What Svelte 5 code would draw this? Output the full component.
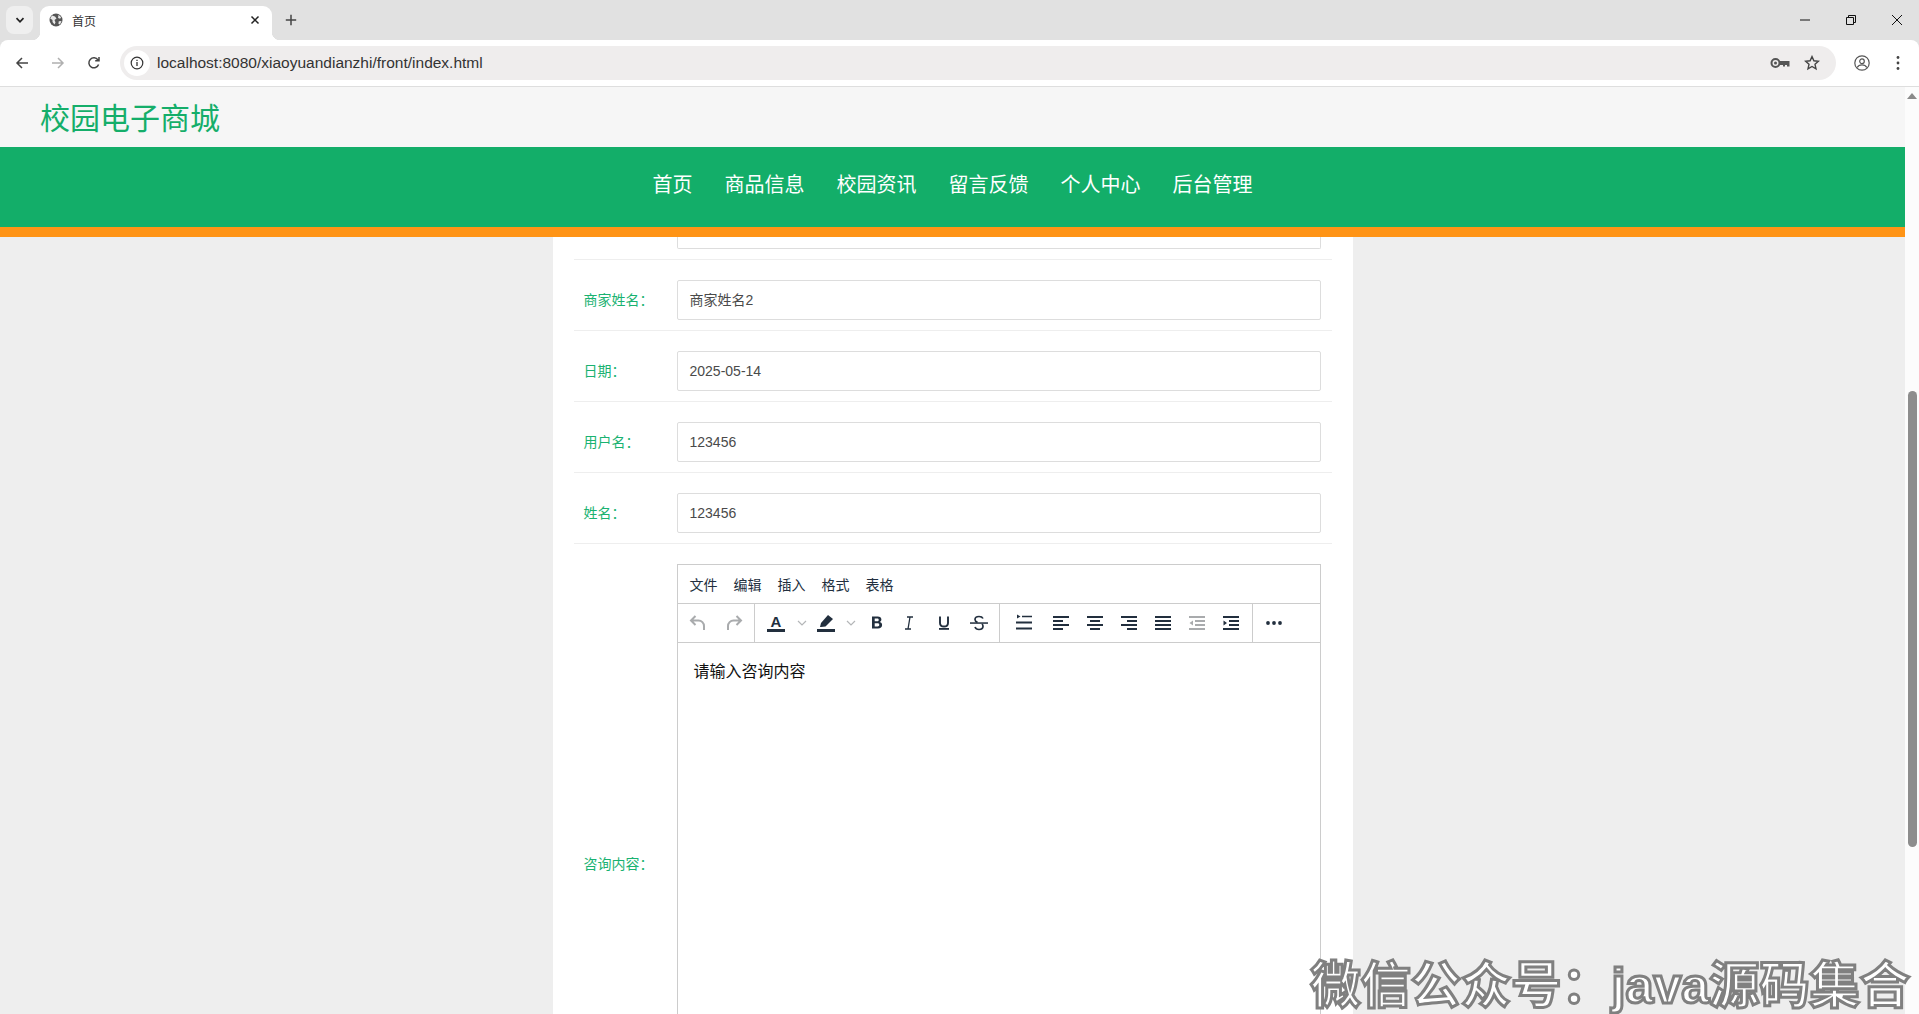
<script>
  const navItems = ['首页', '商品信息', '校园资讯', '留言反馈', '个人中心', '后台管理'];
  const rows = [
    { label: '商家姓名：', value: '商家姓名2' },
    { label: '日期：', value: '2025-05-14' },
    { label: '用户名：', value: '123456' },
    { label: '姓名：', value: '123456' }
  ];
  const menus = ['文件', '编辑', '插入', '格式', '表格'];
</script>

<div class="browser">
  <div class="tabstrip">
    <button class="tab-search" aria-label="Search tabs">
      <svg viewBox="0 0 12 12" width="12" height="12"><path d="M2.5 4.2 6 7.8l3.5-3.6" fill="none" stroke="#222" stroke-width="1.7" /></svg>
    </button>
    <div class="tab">
      <svg class="globe" viewBox="0 0 14 14" width="14" height="14">
        <circle cx="7" cy="7" r="6.5" fill="#555" />
        <path d="M3 2.5l3 1 1.5 2-2 1.5 1 2.5-1 2-2-2.5V7L1.2 5.5zM9.5 1.8l2.6 2.4-1 1.6-2-.8zM12.5 8l-1.5 3.4-1.6-.6.4-2.6z" fill="#e8e8e8" />
      </svg>
      <span class="tab-title">首页</span>
      <svg class="tab-x" viewBox="0 0 10 10" width="10" height="10"><path d="M1.5 1.5l7 7M8.5 1.5l-7 7" stroke="#222" stroke-width="1.5" /></svg>
    </div>
    <svg class="newtab" viewBox="0 0 12 12" width="12" height="12"><path d="M6 .8v10.400M.8 6h10.400" stroke="#444" stroke-width="1.500" /></svg>
    <div class="winctl">
      <svg viewBox="0 0 12 12" width="12" height="12"><path d="M1 6h10" stroke="#111" stroke-width="1" /></svg>
      <svg viewBox="0 0 12 12" width="12" height="12"><path d="M1.500 3.500h7v7h-7zM3.500 3.500v-2h7v7h-2" fill="none" stroke="#111" stroke-width="1" /></svg>
      <svg viewBox="0 0 12 12" width="12" height="12"><path d="M1 1l10 10M11 1 1 11" stroke="#111" stroke-width="1" /></svg>
    </div>
  </div>

  <div class="toolbar">
    <svg class="tool" viewBox="0 0 14 14" width="14" height="14"><path d="M13 7H2M7 2 2 7l5 5" fill="none" stroke="#444" stroke-width="1.500" /></svg>
    <svg class="tool" viewBox="0 0 14 14" width="14" height="14"><path d="M1 7h11M7 2l5 5-5 5" fill="none" stroke="#b0b0b0" stroke-width="1.500" /></svg>
    <svg class="tool" viewBox="0 0 14 14" width="14" height="14"><path d="M11.600 8.500A5 5 0 1 1 11 4M12 1v3.800H8.200" fill="none" stroke="#444" stroke-width="1.500" /></svg>
    <div class="omnibox">
      <span class="info">
        <svg viewBox="0 0 14 14" width="14" height="14"><circle cx="7" cy="7" r="5.800" fill="none" stroke="#333" stroke-width="1.200" /><path d="M7 6v4M7 3.800v1.200" stroke="#333" stroke-width="1.300" /></svg>
      </span>
      <span class="url">localhost:8080/xiaoyuandianzhi/front/index.html</span>
      <svg class="key" viewBox="0 0 20 12" width="20" height="12"><circle cx="5.500" cy="6" r="4" fill="none" stroke="#555" stroke-width="2" /><circle cx="5.500" cy="6" r="1.500" fill="#555" /><path d="M9 4H19.500V9.500h-2.500V8h-2v1.500h-2V8H9z" fill="#555" /></svg>
      <svg class="star" viewBox="0 0 16 16" width="16" height="16"><path d="M8 1.600l1.900 4.200 4.500.5-3.400 3 1 4.500L8 11.500l-4 2.300 1-4.500-3.400-3 4.500-.5z" fill="none" stroke="#444" stroke-width="1.400" /></svg>
    </div>
    <svg class="profile" viewBox="0 0 16 16" width="16" height="16"><circle cx="8" cy="8" r="7.200" fill="none" stroke="#555" stroke-width="1.200" /><circle cx="8" cy="6.200" r="2.300" fill="none" stroke="#555" stroke-width="1.200" /><path d="M3.200 12.600c1-2 3-2.700 4.800-2.700s3.800.7 4.800 2.700" fill="none" stroke="#555" stroke-width="1.200" /></svg>
    <svg class="kebab" viewBox="0 0 4 16" width="4" height="16"><circle cx="2" cy="2.500" r="1.400" fill="#444" /><circle cx="2" cy="8" r="1.400" fill="#444" /><circle cx="2" cy="13.500" r="1.400" fill="#444" /></svg>
  </div>

  <div class="viewport">
    <div class="page">
      <header class="site-head">
        <div class="site-title">校园电子商城</div>
      </header>
      <nav class="site-nav">
        {#each navItems as item}
          <span class="nav-item">{item}</span>
        {/each}
      </nav>

      <main class="sheet">
        <div class="row stub"><div class="label"></div><div class="input"></div></div>
        {#each rows as r}
          <div class="row">
            <div class="label">{r.label}</div>
            <div class="input">{r.value}</div>
          </div>
        {/each}
        <div class="row editor-row">
          <div class="label">咨询内容：</div>
          <div class="editor">
            <div class="menubar">
              {#each menus as m}<span>{m}</span>{/each}
            </div>
            <div class="edbar">
              <div class="group first">
                <svg viewBox="0 0 20 20" width="20" height="20"><path d="M7.500 3 3 7.500l4.500 4.500M3.500 7.500h7a5.500 5.500 0 0 1 5.500 5.500v4" fill="none" stroke="#a9abad" stroke-width="2" /></svg>
                <svg viewBox="0 0 20 20" width="20" height="20"><path d="M12.500 3 17 7.500 12.500 12M16.500 7.500h-7A5.500 5.500 0 0 0 4 13v4" fill="none" stroke="#a9abad" stroke-width="2" /></svg>
              </div>
              <div class="group mid">
                <svg viewBox="0 0 20 20" width="20" height="20"><text x="10" y="13.500" text-anchor="middle" class="glyph">A</text><rect x="1" y="16" width="18" height="3" fill="#222f3e" /></svg>
                <svg class="chev c1" viewBox="0 0 10 10" width="10" height="10"><path d="M1 3l4 4 4-4" fill="none" stroke="#b4b6b8" stroke-width="1.200" /></svg>
                <svg class="hl" viewBox="0 0 20 20" width="20" height="20"><path d="M4 14l1-4 7-8 5 4-7.500 7.500-4.500.5z" fill="#222f3e" /><rect x="1" y="16" width="18" height="3" fill="#222f3e" /></svg>
                <svg class="chev c2" viewBox="0 0 10 10" width="10" height="10"><path d="M1 3l4 4 4-4" fill="none" stroke="#b4b6b8" stroke-width="1.200" /></svg>
                <svg class="b" viewBox="0 0 20 20" width="20" height="20"><path d="M5 3.500h5.700c2.300 0 3.700 1.200 3.700 3 0 1.200-.6 2-1.600 2.500 1.500.4 2.300 1.500 2.300 3 0 2.200-1.600 3.500-4.100 3.500H5zM7.700 5.600v2.600h2.500c1 0 1.500-.5 1.500-1.300s-.5-1.300-1.500-1.300zM7.700 10.200v3.200h2.800c1.200 0 1.800-.6 1.800-1.600s-.6-1.600-1.800-1.600z" fill="#222f3e" fill-rule="evenodd" /></svg>
                <svg class="i" viewBox="0 0 20 20" width="20" height="20"><path d="M8 4h6M6 16h6M11 4 9 16" fill="none" stroke="#222f3e" stroke-width="1.300" /></svg>
                <svg class="u" viewBox="0 0 20 20" width="20" height="20"><path d="M6 3.500v6.500c0 2.400 1.500 3.500 4 3.500s4-1.100 4-3.500V3.500" fill="none" stroke="#222f3e" stroke-width="1.900" /><rect x="5" y="15" width="10" height="1.800" fill="#222f3e" /></svg>
                <svg class="s" viewBox="0 0 20 20" width="20" height="20"><path d="M14 5.500c-.6-1.300-2-2-4-2-2.400 0-4 1-4 3 0 1.500 1 2.300 2.500 2.900M6 14c.6 1.700 2 2.500 4 2.500 2.400 0 4-1.200 4-3.200 0-1-.4-1.700-1-2.300" fill="none" stroke="#222f3e" stroke-width="1.700" /><rect x="1" y="9.300" width="18" height="1.500" fill="#222f3e" /></svg>
              </div>
              <div class="group lines">
                <svg class="lh" viewBox="0 0 20 20" width="20" height="20"><path d="M3 1.500v4l3.500-2zM8 2.700h10v1.600H8zM2 8.500h16v2H2zM2 14.500h16v2H2z" fill="#222f3e" /></svg>
                <svg viewBox="0 0 20 20" width="20" height="20"><path d="M2 3h16v2H2zM2 7h10v2H2zM2 11h16v2H2zM2 15h10v2H2z" fill="#222f3e" /></svg>
                <svg viewBox="0 0 20 20" width="20" height="20"><path d="M2 3h16v2H2zM5 7h10v2H5zM2 11h16v2H2zM5 15h10v2H5z" fill="#222f3e" /></svg>
                <svg viewBox="0 0 20 20" width="20" height="20"><path d="M2 3h16v2H2zM8 7h10v2H8zM2 11h16v2H2zM8 15h10v2H8z" fill="#222f3e" /></svg>
                <svg viewBox="0 0 20 20" width="20" height="20"><path d="M2 3h16v2H2zM2 7h16v2H2zM2 11h16v2H2zM2 15h16v2H2z" fill="#222f3e" /></svg>
                <svg viewBox="0 0 20 20" width="20" height="20"><path d="M2 3h16v2H2zM8 7h10v2H8zM8 11h10v2H8zM2 15h16v2H2zM6 7.500v5L2.500 10z" fill="#a9abad" /></svg>
                <svg viewBox="0 0 20 20" width="20" height="20"><path d="M2 3h16v2H2zM8 7h10v2H8zM8 11h10v2H8zM2 15h16v2H2zM2.500 7.500v5L6 10z" fill="#222f3e" /></svg>
              </div>
              <div class="group more">
                <svg viewBox="0 0 20 20" width="20" height="20"><circle cx="4" cy="10" r="1.900" fill="#222f3e" /><circle cx="10" cy="10" r="1.900" fill="#222f3e" /><circle cx="16" cy="10" r="1.900" fill="#222f3e" /></svg>
              </div>
            </div>
            <div class="edbody">请输入咨询内容</div>
          </div>
        </div>
      </main>
    </div>

    <div class="scrollbar">
      <svg class="arrow" viewBox="0 0 10 6" width="10" height="6"><path d="M0 6 5 0l5 6z" fill="#8a8a8a" /></svg>
      <div class="thumb"></div>
    </div>
    <div class="watermark">微信公众号：java源码集合</div>
  </div>
</div>

<style>
  :global(body) {
    margin: 0;
    overflow: hidden;
    font-family: "Liberation Sans", "Noto Sans CJK SC", sans-serif;
  }
  .browser { display: flex; flex-direction: column; height: 1014px; overflow: hidden; background: #e1e1e1; }

  .tabstrip { display: flex; align-items: flex-start; height: 40px; background: #e1e1e1; flex: none; }
  .tab-search {
    width: 27px; height: 28px; margin: 6px 0 0 6px; padding: 0; border: 0; border-radius: 8px;
    background: #efefef; display: flex; align-items: center; justify-content: center;
  }
  .tab {
    position: relative; display: flex; align-items: center; width: 232px; height: 34px; margin: 6px 0 0 7px;
    padding: 0 12px 6px 9px; box-sizing: border-box; background: #fff; border-radius: 9px 9px 0 0;
  }
  .tab::before, .tab::after { content: ""; position: absolute; bottom: 0; width: 8px; height: 8px; }
  .tab::before { left: -8px; background: radial-gradient(circle at 0 0, transparent 8px, #fff 8.5px); }
  .tab::after { right: -8px; background: radial-gradient(circle at 100% 0, transparent 8px, #fff 8.5px); }
  .globe { margin-right: 9px; }
  .tab-title { flex: 1; font-size: 12px; color: #333; }
  .newtab { margin: 14px 0 0 13px; }
  .winctl { display: flex; gap: 34px; margin: 14px 16px 0 auto; }

  .toolbar { display: flex; align-items: center; height: 46px; flex: none; border-bottom: 1px solid #dedede; background: #fff; border-radius: 8px 8px 0 0; }
  .tool { margin-left: 15px; margin-right: 7px; }
  .omnibox {
    display: flex; align-items: center; width: 1716px; height: 34px; margin-left: 12px; border-radius: 17px;
    background: #efeded; flex: none;
  }
  .info { display: flex; align-items: center; justify-content: center; width: 26px; height: 26px; margin-left: 4px; border-radius: 50%; background: #fff; }
  .url { margin-left: 7px; font-size: 15.5px; color: #333; flex: 1; }
  .key { margin-right: 14px; }
  .star { margin-right: 16px; }
  .profile { margin-left: 18px; }
  .kebab { margin-left: 26px; }

  .viewport { position: relative; flex: 1; min-height: 0; overflow: hidden; }
  .page { display: flex; flex-direction: column; height: 100%; margin-right: 14px; background: #eee; }
  .site-head { height: 60px; background: #f6f6f6; flex: none; display: flex; align-items: center; padding-left: 40px; }
  .site-title { font-size: 30px; color: #15ae6a; line-height: 60px; margin-top: 4px; }
  .site-nav {
    display: flex; justify-content: center; gap: 32px; height: 80px; flex: none;
    background: #13ae69; border-bottom: 10px solid #ff9416;
  }
  .nav-item { font-size: 20px; line-height: 76px; color: #fff; }

  .sheet { width: 800px; margin: 0 auto; padding: 0 21px; box-sizing: border-box; background: #fff; flex: 1; }
  .row {
    display: flex; align-items: flex-start; height: 71px; box-sizing: border-box; padding: 20px 11px 0 10px;
    border-bottom: 1px solid #eee;
  }
  .label { width: 93px; flex: none; font-size: 14px; line-height: 40px; color: #19b271; }
  .input {
    flex: 1; height: 40px; box-sizing: border-box; padding-left: 12px; line-height: 39px;
    font-size: 14px; color: #4a4a4a; border: 1px solid #ddd; border-radius: 2px;
  }
  .row.stub { height: 23px; padding-top: 0; }
  .row.stub .input { height: 12px; border-top: 0; border-radius: 0 0 2px 2px; }

  .row.editor-row { height: 640px; border-bottom: 0; }
  .editor-row .label { margin-top: 280px; }
  .editor { flex: 1; height: 598px; box-sizing: border-box; border: 1px solid #ccc; }
  .menubar { display: flex; gap: 16px; height: 38px; align-items: center; padding-left: 12px; font-size: 14px; color: #222f3e; border-bottom: 1px solid #ccc; }
  .edbar { display: flex; height: 38px; border-bottom: 1px solid #ccc; }
  .group { display: flex; align-items: center; box-sizing: border-box; border-right: 1px solid #ccc; }
  .group.first { width: 77px; padding-left: 10px; gap: 16px; }
  .group.mid { width: 245px; padding-left: 11px; }
  .c1 { margin-left: 11px; }
  .hl { margin-left: 9px; }
  .c2 { margin-left: 10px; }
  .b { margin-left: 11px; }
  .i { margin-left: 12px; }
  .u, .s { margin-left: 15px; }
  .group.lines { width: 253px; padding-left: 14px; gap: 14px; }
  .lh { margin-right: 3px; }
  .group.more { border-right: 0; padding-left: 11px; }
  .glyph { font: 700 15px "Liberation Sans", sans-serif; fill: #222f3e; }
  .edbody { padding: 18px 16px; font-size: 16px; line-height: 1.4; color: #111; }

  .scrollbar { position: absolute; top: 0; right: 0; bottom: 0; width: 14px; background: #fcfcfc; }
  .arrow { position: absolute; top: 6px; left: 2px; }
  .thumb { position: absolute; top: 304px; left: 3px; width: 9px; height: 456px; border-radius: 5px; background: #8d8d8d; }
  .watermark {
    position: absolute; right: 9px; bottom: 1px; font: 700 50.2px/54px "Liberation Sans", "Noto Sans CJK SC", sans-serif;
    color: #fff; -webkit-text-stroke: 3px #808080; white-space: nowrap;
  }
</style>
